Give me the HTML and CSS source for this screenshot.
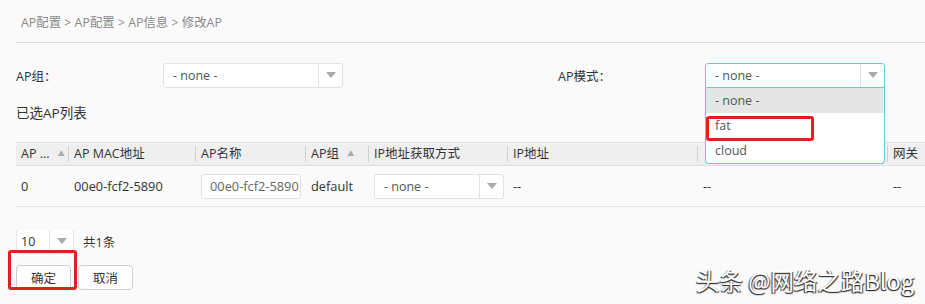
FILE: index.html
```html
<!DOCTYPE html>
<html lang="zh-CN">

<head>
    <meta charset="utf-8">
    <link rel="stylesheet" href="styles.css">
    <title>修改AP</title>
</head>

<body>
    <div class="breadcrumb">AP配置 &gt; AP配置 &gt; AP信息 &gt; 修改AP</div>

    <div class="form-row">
        <label class="form-label">AP组：</label>
        <div class="combo">
            <span class="combo-text">- none -</span>
            <span class="combo-arrow"></span>
        </div>
        <span class="form-spacer"></span>
        <label class="form-label">AP模式：</label>
        <div class="combo combo-open">
            <span class="combo-text">- none -</span>
            <span class="combo-arrow"></span>
            <ul class="combo-list">
                <li class="combo-item combo-item-hover">- none -</li>
                <li class="combo-item">fat<span class="mark mark-fat"></span></li>
                <li class="combo-item">cloud</li>
            </ul>
        </div>
    </div>

    <div class="section-title">已选AP列表</div>

    <div class="grid">
        <div class="grid-head">
            <div class="cell c1">AP ... <span class="sort">▲</span></div>
            <div class="cell c2">AP MAC地址</div>
            <div class="cell c3">AP名称</div>
            <div class="cell c4">AP组 <span class="sort">▲</span></div>
            <div class="cell c5">IP地址获取方式</div>
            <div class="cell c6">IP地址</div>
            <div class="cell c7"></div>
            <div class="cell c8">网关</div>
        </div>
        <div class="grid-row">
            <div class="cell c1">0</div>
            <div class="cell c2">00e0-fcf2-5890</div>
            <div class="cell c3"><span class="text-input">00e0-fcf2-5890</span></div>
            <div class="cell c4">default</div>
            <div class="cell c5">
                <div class="combo combo-small">
                    <span class="combo-text">- none -</span>
                    <span class="combo-arrow"></span>
                </div>
            </div>
            <div class="cell c6">--</div>
            <div class="cell c7">--</div>
            <div class="cell c8">--</div>
        </div>
    </div>

    <div class="pager">
        <div class="combo combo-page">
            <span class="combo-text">10</span>
            <span class="combo-arrow"></span>
        </div>
        <span class="pager-total">共1条</span>
    </div>

    <div class="actions">
        <button class="btn">确定</button>
        <button class="btn">取消</button>
        <span class="mark mark-ok"></span>
    </div>

    <div class="watermark">头条 @网络之路Blog</div>
</body>

</html>
```

FILE: styles.css
```css
*,
*:before,
*:after {
    box-sizing: border-box;
}

body {
    margin: 0;
    width: 925px;
    height: 304px;
    overflow: hidden;
    position: relative;
    background: #fafafa;
    color: #333;
    font-family: "Open Sans", "Noto Sans CJK SC", sans-serif;
    font-size: 12px;
}

.breadcrumb {
    margin-left: 16px;
    height: 43px;
    line-height: 46px;
    padding-left: 5px;
    border-bottom: 1px solid #dcdcdc;
    color: #8a8a8a;
    font-size: 12.4px;
}

.form-row {
    display: flex;
    align-items: center;
    margin: 20px 0 0 16px;
    height: 25px;
}

.form-label {
    width: 147px;
    font-size: 12.5px;
    color: #333;
}

.form-spacer {
    width: 215px;
}

/* combobox */
.combo {
    position: relative;
    display: flex;
    align-items: center;
    width: 180px;
    height: 25px;
    background: #fff;
    border: 1px solid #e2e2e2;
    border-radius: 3px;
}

.combo-text {
    flex-grow: 1;
    padding-left: 9px;
    color: #555;
    font-size: 12.5px;
}

.combo-arrow {
    flex: none;
    width: 24px;
    height: 100%;
    border-left: 1px solid #e2e2e2;
    position: relative;
}

.combo-arrow:after {
    content: "";
    position: absolute;
    left: 7px;
    top: 8px;
    border-left: 5px solid transparent;
    border-right: 5px solid transparent;
    border-top: 6px solid #aaa;
}

.combo-open {
    border-color: #6cc6df;
    border-bottom-left-radius: 0;
    border-bottom-right-radius: 0;
}

.combo-list {
    position: absolute;
    left: 0;
    top: 24px;
    width: 180px;
    margin: 0 -1px;
    padding: 0;
    list-style: none;
    background: #fff;
    border: 1px solid #6cc6df;
    border-top: none;
    border-radius: 0 0 4px 4px;
    z-index: 5;
}

.combo-item {
    position: relative;
    height: 25px;
    line-height: 25px;
    padding-left: 9px;
    color: #555;
    font-size: 12.5px;
}

.combo-item-hover {
    background: #e6e6e6;
}

.combo-small {
    width: 130px;
}

.combo-page {
    width: 58px;
}

.combo-page .combo-text {
    padding-left: 4px;
    color: #333;
}

.combo-page .combo-arrow {
    width: 24px;
}

/* red markers */
.mark {
    position: absolute;
    border: 3px solid #e02020;
    border-radius: 3px;
}

.mark-fat {
    left: 0;
    top: 3px;
    width: 108px;
    height: 25px;
}

.mark-ok {
    left: -8px;
    top: -15px;
    width: 69px;
    height: 40px;
}

.section-title {
    margin: 14px 0 0 16px;
    font-size: 13.5px;
    color: #333;
}

/* grid */
.grid {
    margin: 20px 0 0 16px;
    width: 909px;
    overflow: hidden;
}

.grid-head,
.grid-row {
    display: flex;
    width: 1000px;
}

.grid-head {
    height: 24px;
    background: #efefef;
    border-top: 1px solid #e0e0e0;
    border-bottom: 1px solid #e0e0e0;
    align-items: center;
}

.grid-head .cell {
    position: relative;
    font-size: 12.5px;
    height: 22px;
    line-height: 22px;
}

.grid-head .cell + .cell:before {
    content: "";
    position: absolute;
    left: 0;
    top: 3px;
    height: 16px;
    border-left: 1px solid #cfcfcf;
}

.grid-row {
    height: 41px;
    align-items: center;
    border-bottom: 1px solid #e6e6e6;
    font-size: 12.8px;
}

.cell {
    flex: none;
    padding-left: 6px;
    white-space: nowrap;
    overflow: hidden;
}

.c1 { width: 52px; padding-left: 5px; }
.c2 { width: 127px; }
.c3 { width: 110px; }
.c4 { width: 63px; }
.c5 { width: 139px; }
.c6 { width: 190px; }
.c7 { width: 190px; }
.c8 { width: 100px; }

.sort {
    color: #aaa;
    font-size: 7px;
    margin-left: 5px;
    vertical-align: 2px;
}

.text-input {
    display: block;
    width: 100px;
    height: 25px;
    line-height: 23px;
    padding-left: 8px;
    overflow: hidden;
    background: #fff;
    border: 1px solid #e2e2e2;
    border-radius: 3px;
    color: #666;
}

.pager {
    display: flex;
    align-items: center;
    margin: 22px 0 0 16px;
    height: 25px;
}

.pager .combo {
    border-top-color: #fafafa;
}

.pager-total {
    margin-left: 9px;
    color: #333;
    font-size: 12.5px;
}

.actions {
    position: relative;
    display: flex;
    gap: 7px;
    margin: 11px 0 0 16px;
}

.btn {
    width: 55px;
    height: 25px;
    background: #fff;
    border: 1px solid #cfcfcf;
    border-radius: 4px;
    font-family: "Noto Sans CJK SC", sans-serif;
    font-size: 12.5px;
    color: #333;
    padding: 0;
}

.watermark {
    position: absolute;
    right: 11px;
    bottom: 10px;
    font-family: "Noto Sans CJK SC", sans-serif;
    font-size: 23.5px;
    line-height: 28px;
    color: #fff;
    text-shadow: -1px 1px 1px #333, 1px 1px 1px #333;
}
```
